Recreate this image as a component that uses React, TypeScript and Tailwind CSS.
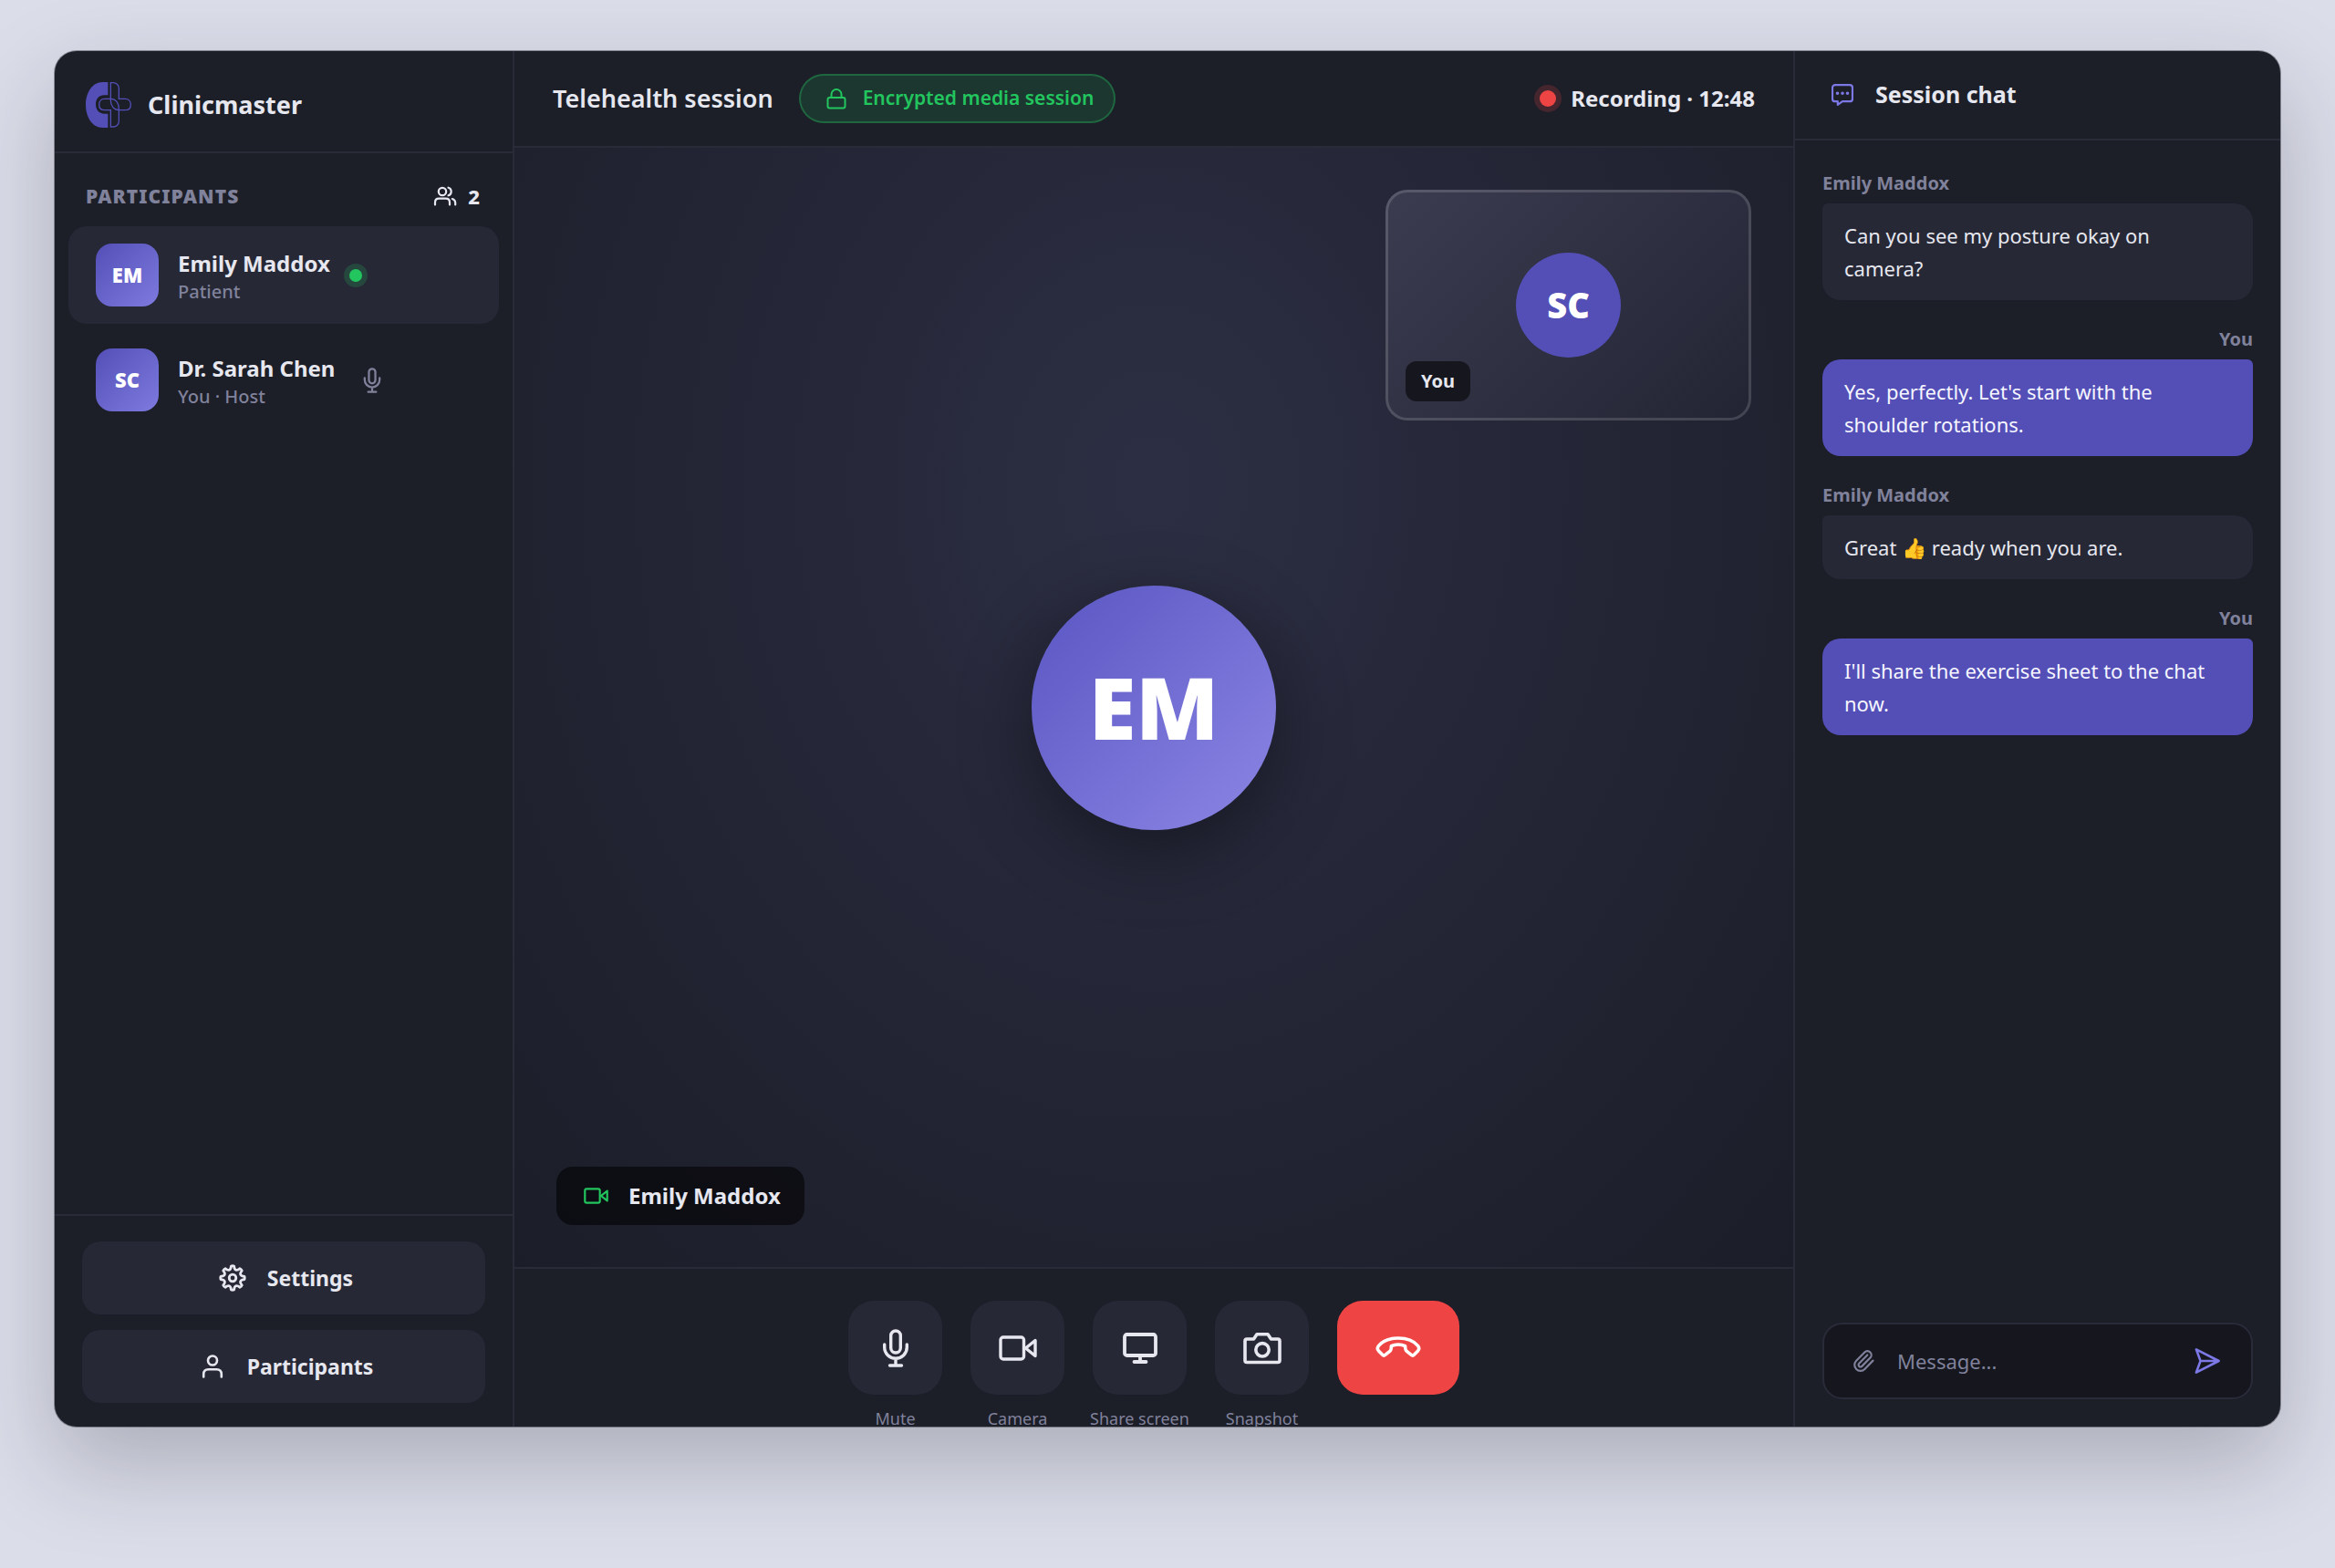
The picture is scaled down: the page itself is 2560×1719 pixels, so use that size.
import type { ReactNode } from 'react'
import { Paperclip } from 'lucide-react'
import clsx from 'clsx'

interface IconProps {
  className?: string
}

function Logo() {
  return (
    <svg viewBox="40 60 150 150" className="h-[50px] w-[50px] shrink-0 overflow-visible text-[#534fb7]" aria-hidden="true">
      <path
        fill="currentColor"
        d="M113 60H95C62 60 40 95 40 135s22 75 55 75h18v-46h-12c-17 0-28-13-28-31s11-30 28-30h12z"
      />
      <g fill="none" stroke="currentColor" strokeWidth="4">
        <path d="M122 62h9c10 0 18 8 18 18v35h21c11 0 18 8 18 19s-7 18-18 18h-21c-16 0-27-14-27-31z" />
        <path d="M122 207h9c10 0 18-8 18-18v-41c0-19-10-33-27-33h-20c-11 0-18 8-18 19s7 18 18 18h20z" />
      </g>
    </svg>
  )
}

function MicIcon({ className }: IconProps) {
  return (
    <svg viewBox="0 0 40 42" className={className} fill="none" stroke="currentColor" strokeWidth="3.400" strokeLinecap="round" aria-hidden="true">
      <rect x="14.700" y="2" width="10.600" height="24" rx="5.300" />
      <path d="M7.700 17v3a12.300 12.300 0 0 0 24.600 0V17M20 32.500v7M13.500 40h13" />
    </svg>
  )
}

function VideoIcon({ className }: IconProps) {
  return (
    <svg viewBox="0 0 42 28" className={className} fill="none" stroke="currentColor" strokeWidth="3.400" strokeLinejoin="round" aria-hidden="true">
      <rect x="2" y="2" width="25.500" height="24" rx="3" />
      <path d="M29.500 14 40 5.500v17z" />
    </svg>
  )
}

function MonitorIcon({ className }: IconProps) {
  return (
    <svg viewBox="0 0 40 36" className={className} fill="none" stroke="currentColor" strokeWidth="3.800" strokeLinecap="round" aria-hidden="true">
      <rect x="3" y="3" width="34" height="23" rx="2.500" />
      <path d="M20 26v7M13.500 33h13" />
    </svg>
  )
}

function CameraIcon({ className }: IconProps) {
  return (
    <svg viewBox="0 0 42 36" className={className} fill="none" stroke="currentColor" strokeWidth="3.600" strokeLinejoin="round" aria-hidden="true">
      <path d="M4 8h7.500l3.500-5.200h12L30.500 8H38a2 2 0 0 1 2 2v21.500a2 2 0 0 1-2 2H4a2 2 0 0 1-2-2V10a2 2 0 0 1 2-2z" />
      <circle cx="21" cy="19.800" r="7.200" />
    </svg>
  )
}

function HangUpIcon({ className }: IconProps) {
  return (
    <svg viewBox="0 0 50 26" className={className} fill="none" stroke="currentColor" strokeWidth="3.600" strokeLinejoin="round" aria-hidden="true">
      <path d="M25 2C15 2 7.500 5.500 3.500 10.300c-1.600 1.900-1.500 4.200.2 6l4 4c.9.900 2 .900 3 .1l5-4c1.600-1.200 1.700-3.100 1.700-5.700 2.500-1.300 4.800-1.700 7.600-1.700s5.100.4 7.600 1.700c0 2.600.1 4.500 1.700 5.700l5 4c1 .8 2.100.8 3-.1l4-4c1.700-1.800 1.800-4.100.2-6C42.500 5.500 35 2 25 2z" />
    </svg>
  )
}

function GearIcon({ className }: IconProps) {
  const at = (deg: number, r: number) => {
    const a = (deg * Math.PI) / 180
    return `${(15 + r * Math.sin(a)).toFixed(2)} ${(15 - r * Math.cos(a)).toFixed(2)}`
  }
  const teeth = Array.from({ length: 8 }, (_, i) => i * 45)
  const d = `M${at(-7, 13)} ${teeth
    .map((t) => `Q${at(t, 13.6)} ${at(t + 7, 13)}L${at(t + 11, 10.8)}Q${at(t + 22.5, 8.4)} ${at(t + 34, 10.8)}L${at(t + 38, 13)}`)
    .join('')}z`
  return (
    <svg viewBox="0 0 30 30" className={className} fill="none" stroke="currentColor" strokeWidth="2.800" strokeLinejoin="round" aria-hidden="true">
      <path d={d} />
      <circle cx="15" cy="15" r="3.800" />
    </svg>
  )
}

function UserIcon({ className }: IconProps) {
  return (
    <svg viewBox="0 0 24 26" className={className} fill="none" stroke="currentColor" strokeWidth="2.600" strokeLinecap="round" aria-hidden="true">
      <circle cx="12" cy="6.500" r="5" />
      <path d="M2.200 24.500v-3c0-3.300 2-5.300 5.300-5.300h9c3.300 0 5.300 2 5.300 5.300v3" />
    </svg>
  )
}

function UsersIcon({ className }: IconProps) {
  return (
    <svg viewBox="0 0 26 22" className={className} fill="none" stroke="currentColor" strokeWidth="2.200" strokeLinecap="round" aria-hidden="true">
      <circle cx="10" cy="6" r="4.200" />
      <path d="M2 20.500V18c0-2.700 1.600-4.300 4.300-4.300h7.400c2.700 0 4.300 1.600 4.300 4.300v2.500M16.500 1.700c2 .5 3.200 2.200 3.200 4.300s-1.200 3.800-3.200 4.300M20.800 14c2.200.6 3.400 2.100 3.400 4.300v2.200" />
    </svg>
  )
}

function LockIcon({ className }: IconProps) {
  return (
    <svg viewBox="0 0 22 24" className={className} fill="none" stroke="currentColor" strokeWidth="2" aria-hidden="true">
      <rect x="1.500" y="11" width="19" height="11.500" rx="2" />
      <path d="M5.500 11V7.500a5.500 5.500 0 0 1 11 0V11" />
    </svg>
  )
}

function ChatIcon({ className }: IconProps) {
  return (
    <svg viewBox="0 0 24 24" className={className} fill="none" stroke="currentColor" strokeWidth="2.200" strokeLinejoin="round" aria-hidden="true">
      <path d="M4 1.200h16a3 3 0 0 1 3 3v12a3 3 0 0 1-3 3h-8l-5.200 3.600v-3.600H4a3 3 0 0 1-3-3v-12a3 3 0 0 1 3-3z" />
      <path d="M6.500 10.300h.01M12 10.300h.01M17.500 10.300h.01" strokeWidth="3.600" strokeLinecap="round" />
    </svg>
  )
}

function SendIcon({ className }: IconProps) {
  return (
    <svg viewBox="0 0 30 30" className={className} fill="none" stroke="currentColor" strokeWidth="2.800" strokeLinejoin="round" aria-hidden="true">
      <path d="M2 1.500 28.500 15 2 28.500 7 15zM7 15h21" />
    </svg>
  )
}

const participants = [
  { name: 'Emily Maddox', initials: 'EM', role: 'Patient', speaking: true },
  { name: 'Dr. Sarah Chen', initials: 'SC', role: 'You · Host', speaking: false },
]

const messages = [
  { from: 'Emily Maddox', text: 'Can you see my posture okay on camera?' },
  { from: 'You', text: "Yes, perfectly. Let's start with the shoulder rotations." },
  { from: 'Emily Maddox', text: 'Great 👍 ready when you are.' },
  { from: 'You', text: "I'll share the exercise sheet to the chat now." },
]

const controls = [
  { label: 'Mute', icon: <MicIcon className="h-[42px] w-10" /> },
  { label: 'Camera', icon: <VideoIcon className="h-7 w-[42px]" /> },
  { label: 'Share screen', icon: <MonitorIcon className="h-9 w-10" /> },
  { label: 'Snapshot', icon: <CameraIcon className="h-9 w-[42px]" /> },
]

function SidebarButton({ icon, children }: { icon: ReactNode; children: ReactNode }) {
  return (
    <button className="flex h-20 w-full cursor-pointer items-center justify-center gap-[18px] rounded-[20px] bg-[#262836] text-[23px] font-bold">
      <span className="flex w-10 justify-center">{icon}</span>
      {children}
    </button>
  )
}

function Sidebar() {
  return (
    <aside className="flex w-[504px] shrink-0 flex-col border-r-2 border-[#292b39]">
      <div className="flex h-28 shrink-0 items-center gap-[18px] border-b-2 border-[#292b39] px-[34px] pt-2">
        <Logo />
        <span className="text-[27px] font-bold">Clinicmaster</span>
      </div>

      <div className="flex items-center justify-between pt-[31px] pr-9 pb-[17px] pl-[34px]">
        <h2 className="text-[21px] leading-8 font-black tracking-wider text-[#80829b]">PARTICIPANTS</h2>
        <div className="flex items-center gap-3 text-[22px] leading-8 font-extrabold">
          <UsersIcon className="h-[22px] w-[26px]" />
          2
        </div>
      </div>

      <ul className="flex flex-col gap-2 px-[15px]">
        {participants.map((p) => (
          <li
            key={p.name}
            className={clsx('flex h-[107px] items-center gap-[21px] rounded-[20px] px-[30px]', p.speaking && 'bg-[#262836]')}
          >
            <div className="flex h-[69px] w-[69px] shrink-0 items-center justify-center rounded-[18px] bg-linear-135 from-[#534fb7] to-[#7e7adf] text-[22px] font-black text-white">
              {p.initials}
            </div>
            <div className="pt-1">
              <p className="text-[24px] leading-8 font-bold">{p.name}</p>
              <p className="text-[20px] leading-[30px] font-medium text-[#80829b]">{p.role}</p>
            </div>
            {p.speaking ? (
              <span className="h-[14px] w-[14px] rounded-full bg-[#22c55e] ring-6 ring-[#22c55e]/20" />
            ) : (
              <span className="flex w-10 justify-center text-[#80829b]">
                <MicIcon className="h-7 w-7" />
              </span>
            )}
          </li>
        ))}
      </ul>

      <div className="mt-auto flex flex-col gap-[17px] border-t-2 border-[#292b39] px-[30px] pt-7 pb-[26px]">
        <SidebarButton icon={<GearIcon className="h-[30px] w-[30px]" />}>Settings</SidebarButton>
        <SidebarButton icon={<UserIcon className="h-[26px] w-6" />}>Participants</SidebarButton>
      </div>
    </aside>
  )
}

function Stage() {
  return (
    <main className="flex min-w-0 flex-1 flex-col">
      <header className="flex h-[106px] shrink-0 items-center gap-7 border-b-2 border-[#292b39] px-[42px]">
        <h1 className="text-[27px] font-semibold">Telehealth session</h1>
        <div className="flex h-[54px] items-center gap-[18px] rounded-full border-2 border-[#22c55e]/35 bg-[#22c55e]/15 pr-[22px] pl-7 text-[21px] font-semibold text-[#22c55e]">
          <LockIcon className="h-6 w-[22px]" />
          Encrypted media session
        </div>
        <div className="ml-auto flex items-center gap-4 text-[24px] font-bold">
          <span className="h-[18px] w-[18px] rounded-full bg-[#ef4444] ring-6 ring-[#ef4444]/20" />
          Recording · 12:48
        </div>
      </header>

      <section className="relative flex flex-1 items-center justify-center bg-[radial-gradient(ellipse_at_50%_30%,#2c2e43_0%,#1b1d28_100%)]">
        <div className="flex h-[268px] w-[268px] items-center justify-center rounded-full bg-linear-135 from-[#5a55c2] to-[#8c86e4] text-[94px] font-black text-white shadow-[0_24px_80px_rgba(0,0,0,0.4)]">
          EM
        </div>

        {/* Self view */}
        <div className="absolute top-[46px] right-[46px] flex h-[253px] w-[401px] items-center justify-center rounded-3xl border-3 border-white/15 bg-linear-135 from-[#3b3c50] to-[#232433] bg-origin-border">
          <div className="flex h-[115px] w-[115px] items-center justify-center rounded-full bg-[#534fb7] text-[38px] font-black text-white">
            SC
          </div>
          <span className="absolute bottom-[18px] left-[19px] rounded-xl bg-[#15161e] px-[17px] text-[20px] leading-[44px] font-bold">
            You
          </span>
        </div>

        <div className="absolute bottom-[46px] left-[46px] flex h-16 items-center gap-[22px] rounded-[18px] bg-black/55 pr-[26px] pl-[30px] text-[24px] font-bold">
          <VideoIcon className="h-[18px] w-[27px] text-[#22c55e]" />
          Emily Maddox
        </div>
      </section>

      <footer className="flex h-[175px] shrink-0 justify-center gap-[31px] border-t-2 border-[#292b39] pt-[35px]">
        {controls.map((c) => (
          <div key={c.label} className="flex w-[103px] flex-col items-center gap-[18px]">
            <button
              aria-label={c.label}
              className="flex h-[103px] w-[103px] shrink-0 cursor-pointer items-center justify-center rounded-[28px] bg-[#262836]"
            >
              {c.icon}
            </button>
            <span className="text-[18px] leading-4 whitespace-nowrap text-[#80829b]">{c.label}</span>
          </div>
        ))}
        <button
          aria-label="End call"
          className="flex h-[103px] w-[134px] cursor-pointer items-center justify-center rounded-[28px] bg-[#ef4444] text-white"
        >
          <HangUpIcon className="h-[26px] w-[50px]" />
        </button>
      </footer>
    </main>
  )
}

function Chat() {
  return (
    <aside className="flex w-[534px] shrink-0 flex-col border-l-2 border-[#292b39]">
      <div className="flex h-[98px] shrink-0 items-center gap-6 border-b-2 border-[#292b39] px-10">
        <ChatIcon className="h-6 w-6 text-[#7c78e6]" />
        <h2 className="text-[25px] font-bold">Session chat</h2>
      </div>

      <ul className="flex flex-1 flex-col gap-7 px-[30px] pt-8">
        {messages.map((m) => {
          const mine = m.from === 'You'
          return (
            <li key={m.text} className="flex flex-col gap-2">
              <span className={clsx('text-[20px] leading-[29px] font-bold text-[#80829b]', mine && 'text-right')}>{m.from}</span>
              <p
                className={clsx(
                  'px-6 py-[17px] text-[22px] leading-9',
                  mine
                    ? 'rounded-[20px] rounded-tr-md bg-[#534fb7] text-[#f6f6ff]'
                    : 'rounded-[20px] rounded-tl-md bg-[#262836]'
                )}
              >
                {m.text}
              </p>
            </li>
          )
        })}
      </ul>

      <form className="mx-[30px] mb-[30px] flex h-[84px] items-center gap-6 rounded-[22px] border-2 border-[#292b39] bg-[#15161e] pr-[34px] pl-[30px]">
        <button type="button" aria-label="Attach file" className="cursor-pointer text-[#80829b]">
          <Paperclip className="h-[26px] w-[26px]" />
        </button>
        <input
          type="text"
          aria-label="Message"
          placeholder="Message..."
          className="min-w-0 flex-1 bg-transparent text-[22px] outline-none placeholder:text-[#80829b]"
        />
        <button type="button" aria-label="Send" className="cursor-pointer text-[#7c78e6]">
          <SendIcon className="h-7 w-7" />
        </button>
      </form>
    </aside>
  )
}

export default function App() {
  return (
    <div className="min-h-screen bg-[#dbdde9] px-[60px] pt-14 font-['Noto_Sans','Open_Sans',sans-serif] text-[#e6e7ef]">
      <div className="flex h-[calc(100vh-211px)] overflow-hidden rounded-3xl bg-[#1c1e28] shadow-[0_0_0_1px_rgba(28,30,40,0.4),0_40px_100px_rgba(28,30,40,0.25)]">
        <Sidebar />
        <Stage />
        <Chat />
      </div>
    </div>
  )
}
